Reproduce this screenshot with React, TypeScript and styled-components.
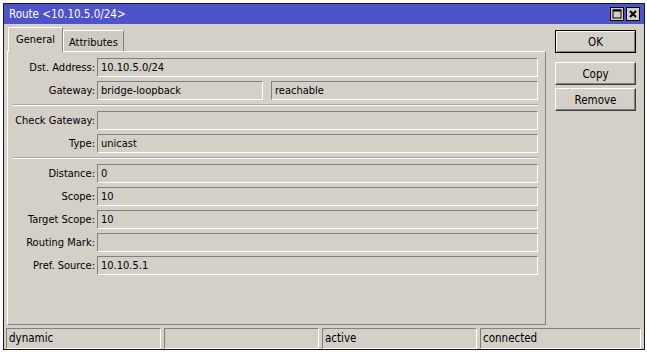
import React from "react";
import styled, { createGlobalStyle } from "styled-components";

const Global = createGlobalStyle`
  html, body { margin: 0; padding: 0; background: #ffffff; }
  body { font-family: "DejaVu Sans Condensed", "DejaVu Sans", sans-serif; font-size: 11px; color: #000; }
`;

const Window = styled.div`
  margin: 3px 0 0 3px;
  width: 640px;
  height: 345px;
  border: 1px solid #1a1a1a;
  background: #d4d0c8;
  display: flex;
  flex-direction: column;
`;

const TitleBar = styled.div`
  height: 20px;
  flex: none;
  background: #4f53c9;
  display: flex;
  align-items: center;
  padding: 0 4px 0 5px;
  color: #fff;
  font-size: 11.5px;
`;

const Title = styled.div`
  flex: 1;
`;

const TitleBtn = styled.div`
  width: 12px;
  height: 12px;
  background: #d4d0c8;
  border: 1px solid #000;
  margin-left: 2px;
  display: flex;
  align-items: center;
  justify-content: center;
`;

const Body = styled.div`
  flex: 1;
  display: flex;
  padding: 3px 0 0 3px;
`;

const Main = styled.div`
  width: 539px;
  display: flex;
  flex-direction: column;
`;

const Tabs = styled.div`
  display: flex;
  align-items: flex-end;
  height: 24px;
  padding-left: 1px;
`;

const Tab = styled.div<{ $active?: boolean }>`
  box-sizing: border-box;
  height: ${(p) => (p.$active ? 25 : 21)}px;
  padding: ${(p) => (p.$active ? "0 7px 1px" : "2px 5px 0")};
  display: flex;
  align-items: center;
  border-top: 1px solid #fff;
  border-left: 1px solid #fff;
  border-right: 1px solid #808080;
  background: ${(p) => (p.$active ? "#d4d0c8" : "#cfcbc3")};
  margin-bottom: ${(p) => (p.$active ? -1 : 0)}px;
  position: relative;
  z-index: ${(p) => (p.$active ? 1 : 0)};
  font-size: 11px;
`;

const Panel = styled.div`
  height: 266px;
  border-top: 1px solid #fff;
  border-left: 1px solid #fff;
  border-right: 1px solid #808080;
  border-bottom: 1px solid #808080;
  padding: 6px 7px 0 0;
  display: flex;
  flex-direction: column;
  gap: 4px;
`;

const Row = styled.div`
  display: grid;
  grid-template-columns: 87px 1fr;
  column-gap: 2px;
  height: 19px;
`;

const Label = styled.div`
  text-align: right;
  line-height: 19px;
  white-space: nowrap;
`;

const Fields = styled.div`
  display: flex;
  gap: 8px;
`;

const Field = styled.div<{ $w?: number }>`
  ${(p) => (p.$w ? `width: ${p.$w}px;` : "flex: 1;")}
  height: 19px;
  box-sizing: border-box;
  border-top: 1px solid #808080;
  border-left: 1px solid #808080;
  border-right: 1px solid #fff;
  border-bottom: 1px solid #fff;
  padding-left: 3px;
  line-height: 17px;
  white-space: nowrap;
`;

const Separator = styled.div`
  margin: 0 0 1px 5px;
  height: 0;
  border-top: 1px solid #a8a49c;
  border-bottom: 1px solid #fff;
`;

const Side = styled.div`
  flex: 1;
  display: flex;
  flex-direction: column;
  align-items: flex-start;
  padding: 3px 0 0 9px;
`;

const Button = styled.div<{ $default?: boolean; $gap?: number }>`
  width: 81px;
  height: 23px;
  box-sizing: border-box;
  margin-top: ${(p) => p.$gap ?? 0}px;
  display: flex;
  align-items: center;
  justify-content: center;
  font-size: 11.5px;
  border: 1px solid;
  border-color: ${(p) => (p.$default ? "#000" : "#fff #404040 #404040 #fff")};
  box-shadow: ${(p) =>
    p.$default
      ? "inset 1px 1px 0 #fff, inset -1px -1px 0 #808080"
      : "inset -1px -1px 0 #808080"};
`;

const StatusBar = styled.div`
  display: grid;
  grid-template-columns: 155px 155px 155px 1fr;
  column-gap: 3px;
  padding: 3px 3px 1px 2px;
  height: 25px;
  box-sizing: border-box;
`;

const Cell = styled.div`
  box-sizing: border-box;
  border-top: 1px solid #808080;
  border-left: 1px solid #808080;
  border-right: 1px solid #fff;
  border-bottom: 1px solid #fff;
  padding-left: 2px;
  line-height: 19px;
  font-size: 11.5px;
`;

type R = { label: string; value?: string };

const section1: R[] = [{ label: "Dst. Address:", value: "10.10.5.0/24" }];
const section2: R[] = [
  { label: "Check Gateway:", value: "" },
  { label: "Type:", value: "unicast" },
];
const section3: R[] = [
  { label: "Distance:", value: "0" },
  { label: "Scope:", value: "10" },
  { label: "Target Scope:", value: "10" },
  { label: "Routing Mark:", value: "" },
  { label: "Pref. Source:", value: "10.10.5.1" },
];

const FieldRow = ({ label, value }: R) => (
  <Row>
    <Label>{label}</Label>
    <Field>{value}</Field>
  </Row>
);

export default function App() {
  return (
    <>
      <Global />
      <Window>
        <TitleBar>
          <Title>Route &lt;10.10.5.0/24&gt;</Title>
          <TitleBtn>
            <svg width="10" height="10" viewBox="0 0 10 10">
              <rect x="1" y="1" width="8" height="8" fill="none" stroke="#000" strokeWidth="1" />
              <line x1="1" y1="1.5" x2="9" y2="1.5" stroke="#000" strokeWidth="2" />
            </svg>
          </TitleBtn>
          <TitleBtn>
            <svg width="10" height="10" viewBox="0 0 10 10">
              <path d="M2 2 L8 8 M8 2 L2 8" stroke="#000" strokeWidth="2" />
            </svg>
          </TitleBtn>
        </TitleBar>
        <Body>
          <Main>
            <Tabs>
              <Tab $active>General</Tab>
              <Tab>Attributes</Tab>
            </Tabs>
            <Panel>
              {section1.map((r) => (
                <FieldRow key={r.label} {...r} />
              ))}
              <Row>
                <Label>Gateway:</Label>
                <Fields>
                  <Field $w={166}>bridge-loopback</Field>
                  <Field>reachable</Field>
                </Fields>
              </Row>
              <Separator />
              {section2.map((r) => (
                <FieldRow key={r.label} {...r} />
              ))}
              <Separator />
              {section3.map((r) => (
                <FieldRow key={r.label} {...r} />
              ))}
            </Panel>
          </Main>
          <Side>
            <Button $default>OK</Button>
            <Button $gap={9}>Copy</Button>
            <Button $gap={3}>Remove</Button>
          </Side>
        </Body>
        <StatusBar>
          <Cell>dynamic</Cell>
          <Cell></Cell>
          <Cell>active</Cell>
          <Cell>connected</Cell>
        </StatusBar>
      </Window>
    </>
  );
}
